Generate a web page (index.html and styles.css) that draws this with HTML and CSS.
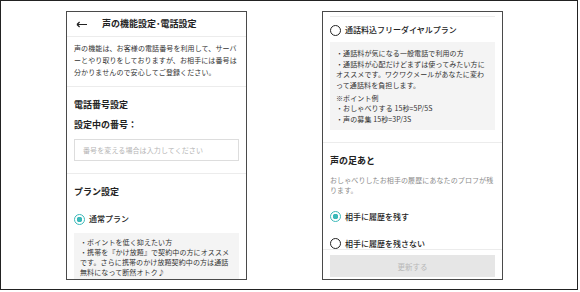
FILE: index.html
```html
<!DOCTYPE html>
<html lang="ja">
<head>
<meta charset="utf-8">
<link rel="stylesheet" href="styles.css">
</head>
<body>
<div class="frame">
  <div class="phone">
    <div class="header">
      <svg class="back" width="11" height="7" viewBox="0 0 11 7"><path d="M1 3.5H11M1 3.5L3.6 1M1 3.5L3.6 6" stroke="#222" stroke-width="1.2" fill="none"/></svg>
      <span class="title">声の機能設定･電話設定</span>
    </div>
    <p class="intro">声の機能は、お客様の電話番号を利用して、サーバーとやり取りをしておりますが、お相手には番号は分かりませんので安心してご登録ください。</p>
    <div class="section">
      <h3 class="h">電話番号設定</h3>
      <div class="label">設定中の番号：</div>
      <div class="input">番号を変える場合は入力してください</div>
    </div>
    <div class="section">
      <h3 class="h">プラン設定</h3>
      <div class="radio-row first"><span class="radio on"></span><span class="rlabel">通常プラン</span></div>
      <div class="box left-box">
        <p>・ポイントを低く抑えたい方<br>・携帯を『かけ放題』で契約中の方にオススメです。さらに携帯のかけ放題契約中の方は通話無料になって断然オトク♪</p>
      </div>
    </div>
  </div>

  <div class="phone">
    <div class="scroll">
      <div class="topline"></div>
      <div class="section tight">
        <div class="radio-row"><span class="radio"></span><span class="rlabel">通話料込フリーダイヤルプラン</span></div>
        <div class="box right-box">
          <p>・通話料が気になる一般電話で利用の方<br>・通話料が心配だけどまずは使ってみたい方にオススメです。ワクワクメールがあなたに変わって通話料を負担します。</p>
          <p class="gap">※ポイント例<br>・おしゃべりする 15秒=5P/5S<br>・声の募集 15秒=3P/3S</p>
        </div>
      </div>
      <div class="section plain">
        <h3 class="h">声の足あと</h3>
        <p class="desc">おしゃべりしたお相手の履歴にあなたのプロフが残ります。</p>
        <div class="radio-row r1"><span class="radio on"></span><span class="rlabel">相手に履歴を残す</span></div>
        <div class="radio-row r2"><span class="radio"></span><span class="rlabel">相手に履歴を残さない</span></div>
      </div>
    </div>
    <div class="footer">
      <div class="button">更新する</div>
    </div>
  </div>
</div>
</body>
</html>
```
FILE: styles.css
```css
* { box-sizing: border-box; }
html, body { margin: 0; padding: 0; background: #fff; }
body {
  font-family: "Noto Sans CJK JP", "Noto Sans", sans-serif;
  color: #333;
}
.frame {
  width: 578px;
  height: 290px;
  border: 1px solid #222;
  display: flex;
  gap: 75px;
  padding: 10px 0 0 65px;
  background: #fff;
}
.phone {
  width: 181px;
  height: 269px;
  border: 1px solid #4a4a4a;
  overflow: hidden;
  display: flex;
  flex-direction: column;
  background: #fff;
  flex: none;
}
.header {
  height: 25px;
  flex: none;
  display: flex;
  align-items: center;
  padding-left: 9px;
  border-bottom: 1px solid #ececec;
}
.back { display: block; flex: none; }
.title {
  margin-left: 15px;
  font-size: 9px;
  font-weight: 700;
  color: #222;
  line-height: 12px;
}
.intro {
  margin: 0;
  padding: 5px 7px 8px;
  font-size: 7px;
  line-height: 12px;
  letter-spacing: 0.1px;
  border-bottom: 1px solid #ececec;
  flex: none;
}
.section {
  padding: 12px 7px 12px;
  border-bottom: 1px solid #ececec;
  flex: none;
}
.h {
  margin: 0;
  font-size: 9px;
  line-height: 12px;
  font-weight: 700;
  color: #222;
}
.label {
  margin-top: 8px;
  font-size: 9px;
  line-height: 12px;
  font-weight: 700;
  color: #222;
}
.input {
  margin-top: 8px;
  height: 22px;
  border: 1px solid #ddd;
  font-size: 7px;
  color: #b5b5b5;
  padding-left: 8px;
  display: flex;
  align-items: center;
  letter-spacing: 0.1px;
}
.radio-row {
  display: flex;
  align-items: center;
  gap: 4px;
  height: 12px;
}
.radio-row.first { margin-top: 15px; }
.radio {
  width: 11px;
  height: 11px;
  border-radius: 50%;
  border: 1.5px solid #222;
  flex: none;
  position: relative;
  background: #fff;
}
.radio.on {
  border-color: #3bb9b9;
  background: radial-gradient(circle, #3bb9b9 0 2.6px, #fff 3px);
}
.rlabel {
  font-size: 8px;
  line-height: 12px;
  color: #222;
  font-weight: 500;
}
.box {
  background: #f4f4f4;
  font-size: 7px;
  letter-spacing: 0.1px;
  color: #333;
}
.box p { margin: 0; }
.left-box {
  margin-top: 8px;
  padding: 4px 6px 6px;
  line-height: 10px;
}
.scroll {
  flex: 1;
  min-height: 0;
  overflow: hidden;
}
.topline {
  margin: 4px 7px 0;
  border-top: 1px solid #ececec;
}
.section.tight { padding-top: 7px; }
.right-box {
  margin-top: 6px;
  padding: 6px 6px 5px;
  line-height: 10.6px;
}
.right-box .gap { margin-top: 2.5px; }
.section.plain { border-bottom: none; }
.desc {
  margin: 8px 0 0;
  font-size: 7px;
  line-height: 10px;
  color: #8c8c8c;
  letter-spacing: 0.1px;
}
.radio-row.r1 { margin-top: 16px; }
.radio-row.r2 { margin-top: 15px; }
.footer {
  flex: none;
  border-top: 1px solid #ececec;
  padding: 5px 7px 2px;
  background: #fff;
}
.button {
  height: 22px;
  background: #e6e6e6;
  color: #b8b8b8;
  font-size: 7.5px;
  display: flex;
  align-items: center;
  justify-content: center;
}
```
